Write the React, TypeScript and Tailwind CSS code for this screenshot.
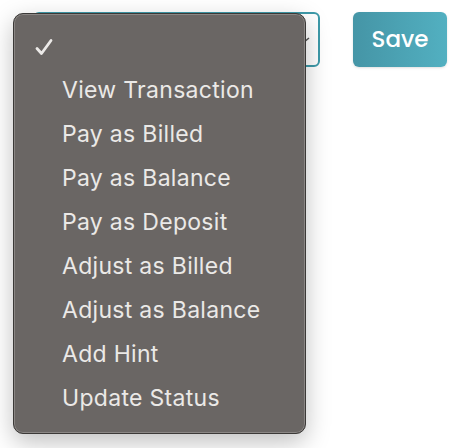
const items = [
  "View Transaction",
  "Pay as Billed",
  "Pay as Balance",
  "Pay as Deposit",
  "Adjust as Billed",
  "Adjust as Balance",
  "Add Hint",
  "Update Status",
];

export default function App() {
  return (
    <div className="relative h-[448px] w-[456px] bg-white">
      <div className="flex gap-[33px] pl-[33px] pt-[12px]">
        <div className="flex h-[55px] w-[287px] items-center justify-end rounded-[6px] border-2 border-[#3e9aa9] bg-white pr-[8px]">
          <svg width="12" height="8" viewBox="0 0 12 8" fill="none" stroke="#555" strokeWidth="1.5">
            <path d="M1 2l5 4 5-4" />
          </svg>
        </div>
        <button className="h-[55px] w-[94px] rounded-[6px] bg-gradient-to-r from-[#4595a6] to-[#52b0c1] text-[23px] font-medium text-white shadow-sm [font-family:Poppins,'Open_Sans',sans-serif]">
          Save
        </button>
      </div>

      <div className="absolute left-[13px] top-[13px] w-[293px] rounded-[10px] border border-[#3b3937] bg-[#6a6664] pb-[13px] pt-[12px] shadow-[0_8px_24px_rgba(0,0,0,0.25)] ring-1 ring-inset ring-[#8a8684] [font-family:Inter,'Noto_Sans',sans-serif]">
        <div className="flex h-[42px] items-center pl-[21px]">
          <svg width="18" height="18" viewBox="0 0 18 18" fill="none" stroke="#eceae8" strokeWidth="2.8" strokeLinecap="round" strokeLinejoin="round">
            <path d="M2 10.5l4.5 5L16 2.5" />
          </svg>
        </div>
        {items.map((label) => (
          <div key={label} className="flex h-[44px] items-center pl-[48px] text-[23px] tracking-[0.3px] text-[#ebe9e7]">
            {label}
          </div>
        ))}
      </div>
    </div>
  );
}
